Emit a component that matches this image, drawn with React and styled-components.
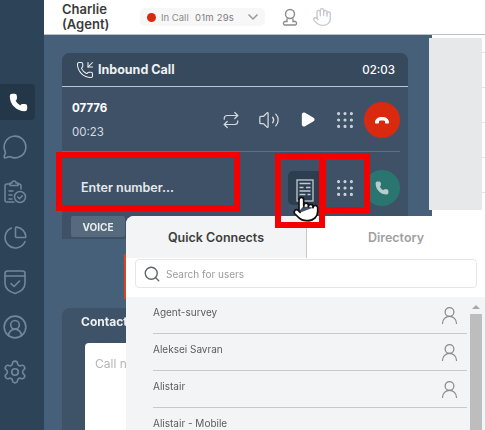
import React from "react";
import styled, { createGlobalStyle } from "styled-components";
import {
  ChartPie,
  CircleUserRound,
  Grip,
  Hand,
  MessageCircle,
  Phone,
  PhoneIncoming,
  Play,
  Pointer,
  Repeat,
  Search,
  Settings,
  UserRound,
  Volume2,
} from "lucide-react";

const contacts = [
  { name: "Agent-survey", icon: true },
  { name: "Aleksei Savran", icon: true },
  { name: "Alistair", icon: true },
  { name: "Alistair - Mobile", icon: false },
];

// Icons the packages don't have
const ClipboardBadge = () => (
  <svg width="24" height="26" viewBox="0 0 24 26" fill="none" stroke="currentColor" strokeWidth="1.5" strokeLinecap="round" strokeLinejoin="round">
    <path d="M11 23H4a2 2 0 0 1-2-2V7a2 2 0 0 1 2-2h3" />
    <path d="M15 5h1a2 2 0 0 1 2 2v3" />
    <path d="M7 6V4h2a2 2 0 0 1 4 0h2v2.500H7z" />
    <path d="M6 12h4M6 16h3M6 20h3" />
    <circle cx="17" cy="18" r="5.500" />
    <path d="m14.800 18 1.700 1.700 2.800-3" />
  </svg>
);

const ShieldBand = () => (
  <svg width="24" height="26" viewBox="0 0 24 26" fill="none" stroke="currentColor" strokeWidth="1.6" strokeLinecap="round" strokeLinejoin="round">
    <path d="M2 4.500C2 3 3 2 4.500 2h15C21 2 22 3 22 4.500V14c0 6-5 9-10 10.500C7 23 2 20 2 14z" />
    <path d="M2 7h20" />
    <path d="m8 14.500 3 3 5.500-5.500" />
  </svg>
);

const HangUp = () => (
  <svg width="16" height="10" viewBox="0 0 16 10" fill="white">
    <path d="M1 7.500C1 4 4 2 8 2s7 2 7 5.500c0 .7-.5 1-1 1h-2c-.6 0-1-.4-1-1V6c-1.800-.6-4.200-.6-6 0v1.500c0 .6-.4 1-1 1H2c-.5 0-1-.3-1-1z" />
  </svg>
);

const ContactSheet = () => (
  <svg width="18" height="23" viewBox="0 0 18 23" fill="none" stroke="#c3cad1" strokeWidth="1.300">
    <rect x="1" y="1" width="16" height="21" />
    <path d="M3.500 4.500h11M3.500 8.500h4M10 8.500h4.500M3.500 12h11M3.500 15.500h6M11.500 15.500h3" />
  </svg>
);

const AgentStatus = () => (
  <svg width="18" height="20" viewBox="0 0 18 20" fill="none" stroke="#8c8c8c" strokeWidth="1.400" strokeLinecap="round">
    <circle cx="9" cy="7" r="4.500" />
    <path d="M6 12v2.500H3.500a2 2 0 0 0 0 3.500h11a2 2 0 0 0 0-3.500H12V12" />
  </svg>
);

export default function App() {
  return (
    <>
      <GlobalStyle />
      <Screen>
        <Rail>
          <RailItem $active>
            <Phone size={19} color="#fff" fill="#fff" />
          </RailItem>
          <RailItem>
            <MessageCircle size={26} strokeWidth={1.5} />
          </RailItem>
          <RailItem>
            <ClipboardBadge />
          </RailItem>
          <RailItem>
            <ChartPie size={25} strokeWidth={1.5} />
          </RailItem>
          <RailItem>
            <ShieldBand />
          </RailItem>
          <RailItem>
            <CircleUserRound size={26} strokeWidth={1.5} />
          </RailItem>
          <RailItem>
            <Settings size={26} strokeWidth={1.5} />
          </RailItem>
        </Rail>

        <Main>
          <Header>
            <AgentName>
              Charlie
              <br />
              (Agent)
            </AgentName>
            <StatusPill>
              <StatusDot />
              <StatusLabel>In Call</StatusLabel>
              <StatusTime>01m 29s</StatusTime>
              <Chevron viewBox="0 0 12 8" width="12" height="8">
                <path d="M1.500 1.500 6 6l4.500-4.500" fill="none" stroke="#9a9a9a" strokeWidth="1.500" />
              </Chevron>
            </StatusPill>
            <HeaderIcons>
              <AgentStatus />
              <Hand size={20} color="#c4c9ce" strokeWidth={1.6} />
            </HeaderIcons>
          </Header>

          <Content>
            <Workspace>
              <CallCard>
                <CallHeader>
                  <CallTitle>
                    <PhoneIncoming size={18} strokeWidth={1.4} />
                    Inbound Call
                  </CallTitle>
                  <span>02:03</span>
                </CallHeader>

                <CallRow>
                  <CallInfo>
                    <CallNumber>07776</CallNumber>
                    <CallTime>00:23</CallTime>
                  </CallInfo>
                  <Action>
                    <Repeat size={18} strokeWidth={1.6} />
                  </Action>
                  <Action>
                    <Volume2 size={22} strokeWidth={1.4} />
                  </Action>
                  <Action>
                    <Play size={17} fill="#fff" color="#fff" />
                  </Action>
                  <Action>
                    <Grip size={22} strokeWidth={1.4} />
                  </Action>
                  <RoundButton $color="#d92a10">
                    <HangUp />
                  </RoundButton>
                </CallRow>

                <CallRow $last>
                  <NumberPrompt>Enter number...</NumberPrompt>
                  <DirectoryTile>
                    <ContactSheet />
                  </DirectoryTile>
                  <Action>
                    <Grip size={22} strokeWidth={1.4} />
                  </Action>
                  <RoundButton $color="#2a7570">
                    <Phone size={14} color="#b9cfcb" fill="#b9cfcb" />
                  </RoundButton>
                </CallRow>

                <TabStrip>
                  <VoiceChip>VOICE</VoiceChip>
                </TabStrip>
              </CallCard>

              <AlertBar />

              <ContactCard>
                <ContactTitle>Contact</ContactTitle>
                <NotesBox>Call notes</NotesBox>
              </ContactCard>
            </Workspace>

            <SidePanel />
            <PageEdge />
          </Content>
        </Main>

        <Popover>
          <PopTabs>
            <PopTab $active>Quick Connects</PopTab>
            <PopTab>Directory</PopTab>
          </PopTabs>
          <SearchArea>
            <SearchBox>
              <Search size={18} color="#5f6368" strokeWidth={1.8} />
              <SearchHint>Search for users</SearchHint>
            </SearchBox>
          </SearchArea>
          <ListArea>
            <Rows>
              {contacts.map((c) => (
                <Row key={c.name}>
                  <span>{c.name}</span>
                  {c.icon && (
                    <RowIcon>
                      <UserRound size={21} color="#8a8a8a" strokeWidth={1.4} />
                    </RowIcon>
                  )}
                </Row>
              ))}
            </Rows>
            <Scrollbar>
              <ScrollArrow />
              <ScrollThumb />
            </Scrollbar>
          </ListArea>
        </Popover>

        <Highlight $x={56} $y={152} $w={184} $h={59} />
        <Highlight $x={275} $y={153} $w={50} $h={75} />
        <Highlight $x={320} $y={153} $w={50} $h={60} />

        <HandCursor>
          <Pointer size={28} color="#111" fill="#fff" strokeWidth={1.4} />
        </HandCursor>
      </Screen>
    </>
  );
}

const GlobalStyle = createGlobalStyle`
  html, body {
    margin: 0;
    padding: 0;
    background: #fff;
  }
  body {
    font-family: Inter, "Liberation Sans", sans-serif;
  }
`;

const Screen = styled.div`
  position: relative;
  display: flex;
  width: 485px;
  height: 430px;
  overflow: hidden;
  filter: blur(0.35px);
`;

const Rail = styled.nav`
  flex: 0 0 44px;
  display: flex;
  flex-direction: column;
  padding-top: 84px;
  gap: 9px;
  background: #2d4358;
  color: #71889b;
`;

const RailItem = styled.div`
  width: 35px;
  height: 36px;
  display: flex;
  align-items: center;
  justify-content: center;
  border-radius: 0 4px 4px 0;
  background: ${(p) => (p.$active ? "#243749" : "transparent")};
  padding: ${(p) => (p.$active ? "0 0 0 2px" : "0 5px 0 0")};
  box-sizing: border-box;
`;

const Main = styled.div`
  flex: 1;
  display: flex;
  flex-direction: column;
  min-width: 0;
`;

const Header = styled.header`
  flex: 0 0 35px;
  box-sizing: border-box;
  display: flex;
  align-items: center;
  background: #fff;
  border-bottom: 1px solid #b9c0c7;
  padding-left: 18px;
`;

const AgentName = styled.div`
  width: 78px;
  font-size: 13px;
  line-height: 15px;
  font-weight: 600;
  color: #3b3b3b;
`;

const StatusPill = styled.div`
  width: 125px;
  height: 18px;
  box-sizing: border-box;
  display: flex;
  align-items: center;
  padding-left: 7px;
  border-radius: 5px;
  background: #f7f7f7;
`;

const StatusDot = styled.span`
  width: 9px;
  height: 9px;
  border-radius: 50%;
  background: #d92a10;
  margin-right: 5px;
`;

const StatusLabel = styled.span`
  width: 34px;
  font-size: 9.5px;
  color: #8a8a8a;
`;

const StatusTime = styled.span`
  font-size: 9.5px;
  letter-spacing: 0.2px;
  color: #7e7e7e;
`;

const Chevron = styled.svg`
  margin-left: auto;
  margin-right: 6px;
`;

const HeaderIcons = styled.div`
  display: flex;
  align-items: center;
  gap: 13px;
  margin-left: 16px;
`;

const Content = styled.div`
  flex: 1;
  display: flex;
  min-height: 0;
`;

const Workspace = styled.main`
  flex: 0 0 388px;
  box-sizing: border-box;
  padding: 18px 24px 0 18px;
  background: #466079;
`;

const CallCard = styled.section`
  border-radius: 8px 8px 0 0;
  background: #3e5166;
  color: #fff;
`;

const CallHeader = styled.div`
  height: 33px;
  display: flex;
  align-items: center;
  justify-content: space-between;
  padding: 0 13px 0 14px;
  border-radius: 8px 8px 0 0;
  border-bottom: 1px solid #bcc6d0;
  background: #37495c;
  font-size: 11.5px;
  font-weight: 500;
`;

const CallTitle = styled.div`
  display: flex;
  align-items: center;
  font-size: 12.5px;
  font-weight: 700;
  color: #eef1f3;

  svg {
    margin-right: 4px;
  }
`;

const CallRow = styled.div`
  height: ${(p) => (p.$last ? "59px" : "65px")};
  box-sizing: border-box;
  display: flex;
  align-items: center;
  margin-right: 8px;
  padding-left: ${(p) => (p.$last ? "19px" : "10px")};
  padding-top: ${(p) => (p.$last ? "12px" : "1px")};
  border-bottom: ${(p) => (p.$last ? "none" : "1px solid #5f7184")};
`;

const CallInfo = styled.div`
  flex: 1;
  display: flex;
  flex-direction: column;
  gap: 10px;
`;

const CallNumber = styled.div`
  font-size: 11.5px;
  font-weight: 700;
`;

const CallTime = styled.div`
  font-size: 11.5px;
  color: #d5dbe1;
`;

const Action = styled.div`
  flex: 0 0 38px;
  display: flex;
  align-items: center;
  justify-content: center;
  color: #d3d9df;
`;

const RoundButton = styled.div`
  flex: 0 0 36px;
  height: 36px;
  display: flex;
  align-items: center;
  justify-content: center;
  border-radius: 50%;
  background: ${(p) => p.$color};
`;

const NumberPrompt = styled.div`
  flex: 1;
  font-size: 12.5px;
  font-weight: 600;
  color: #e6e9ec;
`;

const DirectoryTile = styled.div`
  width: 34px;
  height: 34px;
  margin-right: 4px;
  padding-top: 6px;
  box-sizing: border-box;
  display: flex;
  align-items: center;
  justify-content: center;
  border-radius: 5px;
  background: #2c3e50;
`;

const TabStrip = styled.div`
  height: 28px;
  box-sizing: border-box;
  padding: 5px 0 2px 9px;
`;

const VoiceChip = styled.div`
  width: 54px;
  height: 21px;
  display: flex;
  align-items: center;
  justify-content: center;
  border-radius: 2px;
  background: #566a7e;
  font-size: 10px;
  font-weight: 700;
  color: #e9edf0;
`;

const AlertBar = styled.div`
  width: 40px;
  height: 45px;
  margin: 15px 0 9px 62px;
  background: #d9451c;
`;

const ContactCard = styled.section`
  height: 140px;
  padding: 6px 0 0 19px;
  border-radius: 8px 8px 0 0;
  background: #3e5268;
`;

const ContactTitle = styled.div`
  font-size: 12px;
  font-weight: 700;
  color: #eef1f3;
  margin-bottom: 14px;
`;

const NotesBox = styled.div`
  height: 100px;
  margin-left: 4px;
  padding: 13px 10px;
  border-radius: 4px;
  background: #fff;
  font-size: 12px;
  color: #b5b5b5;
`;

const SidePanel = styled.aside`
  flex: 0 0 53px;
  height: 172px;
  margin: 3px 0 0 -3px;
  background: #e7e8ea;
`;

const PageEdge = styled.div`
  flex: 0 0 3px;
  height: 180px;
  background: repeating-linear-gradient(to bottom, #fff 0 17px, #e2e2e2 17px 18px, #fff 18px 35px);
`;

const Highlight = styled.div`
  position: absolute;
  left: ${(p) => p.$x}px;
  top: ${(p) => p.$y}px;
  width: ${(p) => p.$w}px;
  height: ${(p) => p.$h}px;
  box-sizing: border-box;
  border: 6px solid #f50000;
`;

const Popover = styled.div`
  position: absolute;
  left: 126px;
  top: 216px;
  right: 0;
  bottom: 0;
  display: flex;
  flex-direction: column;
  border-radius: 8px 8px 0 0;
  overflow: hidden;
  background: #fff;
`;

const PopTabs = styled.div`
  flex: 0 0 42px;
  display: flex;
`;

const PopTab = styled.div`
  box-sizing: border-box;
  flex: ${(p) => (p.$active ? "0 0 181px" : "1")};
  display: flex;
  align-items: center;
  justify-content: center;
  font-size: 12.5px;
  font-weight: 600;
  color: ${(p) => (p.$active ? "#3e3e3e" : "#a0a0a0")};
  background: ${(p) => (p.$active ? "#f3f4f6" : "#fff")};
  border-right: ${(p) => (p.$active ? "1.5px solid #c8c8c8" : "none")};
`;

const SearchArea = styled.div`
  flex: 0 0 39px;
  box-sizing: border-box;
  padding: 1px 8px 9px 9px;
`;

const SearchBox = styled.div`
  height: 29px;
  box-sizing: border-box;
  display: flex;
  align-items: center;
  gap: 5px;
  padding-left: 7px;
  border: 1px solid #e6e6e6;
  border-radius: 4px;
`;

const SearchHint = styled.span`
  font-size: 10px;
  color: #9a9a9a;
`;

const ListArea = styled.div`
  flex: 1;
  display: flex;
  min-height: 0;
  background: #f3f4f6;
`;

const Rows = styled.div`
  flex: 1;
  padding-left: 27px;
  min-width: 0;
`;

const Row = styled.div`
  height: 37px;
  box-sizing: border-box;
  display: flex;
  align-items: center;
  justify-content: space-between;
  padding: 0 7px 7px 0;
  border-bottom: 1.5px solid #c9c9c9;
  font-size: 10px;
  color: #5c5c5c;
`;

const RowIcon = styled.div`
  line-height: 0;
  margin-top: 8px;
`;

const Scrollbar = styled.div`
  flex: 0 0 12px;
  margin: 0 3px;
  display: flex;
  flex-direction: column;
  align-items: center;
`;

const ScrollArrow = styled.div`
  margin: 8px 0 5px;
  width: 0;
  height: 0;
  border-left: 4px solid transparent;
  border-right: 4px solid transparent;
  border-bottom: 4px solid #a8a8a8;
`;

const ScrollThumb = styled.div`
  align-self: stretch;
  flex: 1;
  background: #bdbdbd;
`;

const HandCursor = styled.div`
  position: absolute;
  left: 292px;
  top: 195px;
  line-height: 0;
`;
